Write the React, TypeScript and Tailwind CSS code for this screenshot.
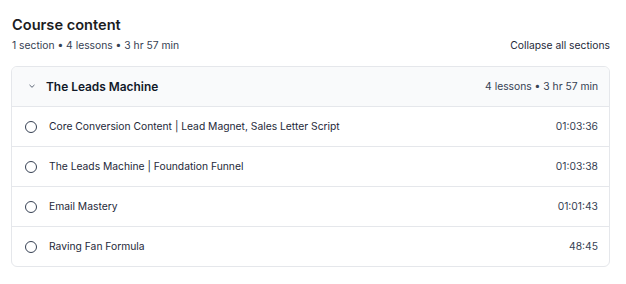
import React from 'react';

const lessons = [
    { title: 'Core Conversion Content | Lead Magnet, Sales Letter Script', duration: '01:03:36' },
    { title: 'The Leads Machine | Foundation Funnel', duration: '01:03:38' },
    { title: 'Email Mastery', duration: '01:01:43' },
    { title: 'Raving Fan Formula', duration: '48:45' },
];

const Chevron = () => (
    <svg width="8" height="8" viewBox="0 0 8 8" fill="none" className="text-gray-600">
        <path d="M1.8 3.2l2.2 2.1 2.2-2.1" stroke="currentColor" strokeWidth="0.9" strokeLinecap="round" strokeLinejoin="round" />
    </svg>
);

export default function App() {
    return (
        <div className="w-[626px] h-[284px] bg-white pl-[11px] pr-[16px] pt-[15px] font-['Inter',sans-serif] text-gray-900">
            <h2 className="pl-px text-[14.6px] leading-[20px] font-semibold text-[#1c1d1f]">Course content</h2>
            <div className="flex items-center justify-between mt-[2px] pl-px">
                <p className="text-[10.3px] leading-[16px] text-gray-700">1 section • 4 lessons • 3 hr 57 min</p>
                <button className="text-[10.3px] leading-[16px] text-gray-800">Collapse all sections</button>
            </div>

            <div className="mt-[13px] rounded-md border border-gray-200 overflow-hidden">
                <div className="h-[39px] bg-gray-50 flex items-center justify-between pl-[16px] pr-[11px]">
                    <div className="flex items-center gap-[10px]">
                        <span className="w-[8px] flex items-center"><Chevron /></span>
                        <span className="text-[11.9px] font-semibold text-gray-900">The Leads Machine</span>
                    </div>
                    <span className="text-[10.3px] text-gray-700">4 lessons • 3 hr 57 min</span>
                </div>
                {lessons.map((l) => (
                    <div key={l.title} className="h-[40px] border-t border-gray-200 flex items-center justify-between pl-[13px] pr-[11px]">
                        <div className="flex items-center gap-[12px]">
                            <span className="w-[12px] h-[12px] rounded-full border border-gray-700" />
                            <span className="text-[10.3px] text-gray-800">{l.title}</span>
                        </div>
                        <span className="text-[10.3px] text-gray-700">{l.duration}</span>
                    </div>
                ))}
            </div>
        </div>
    );
}
